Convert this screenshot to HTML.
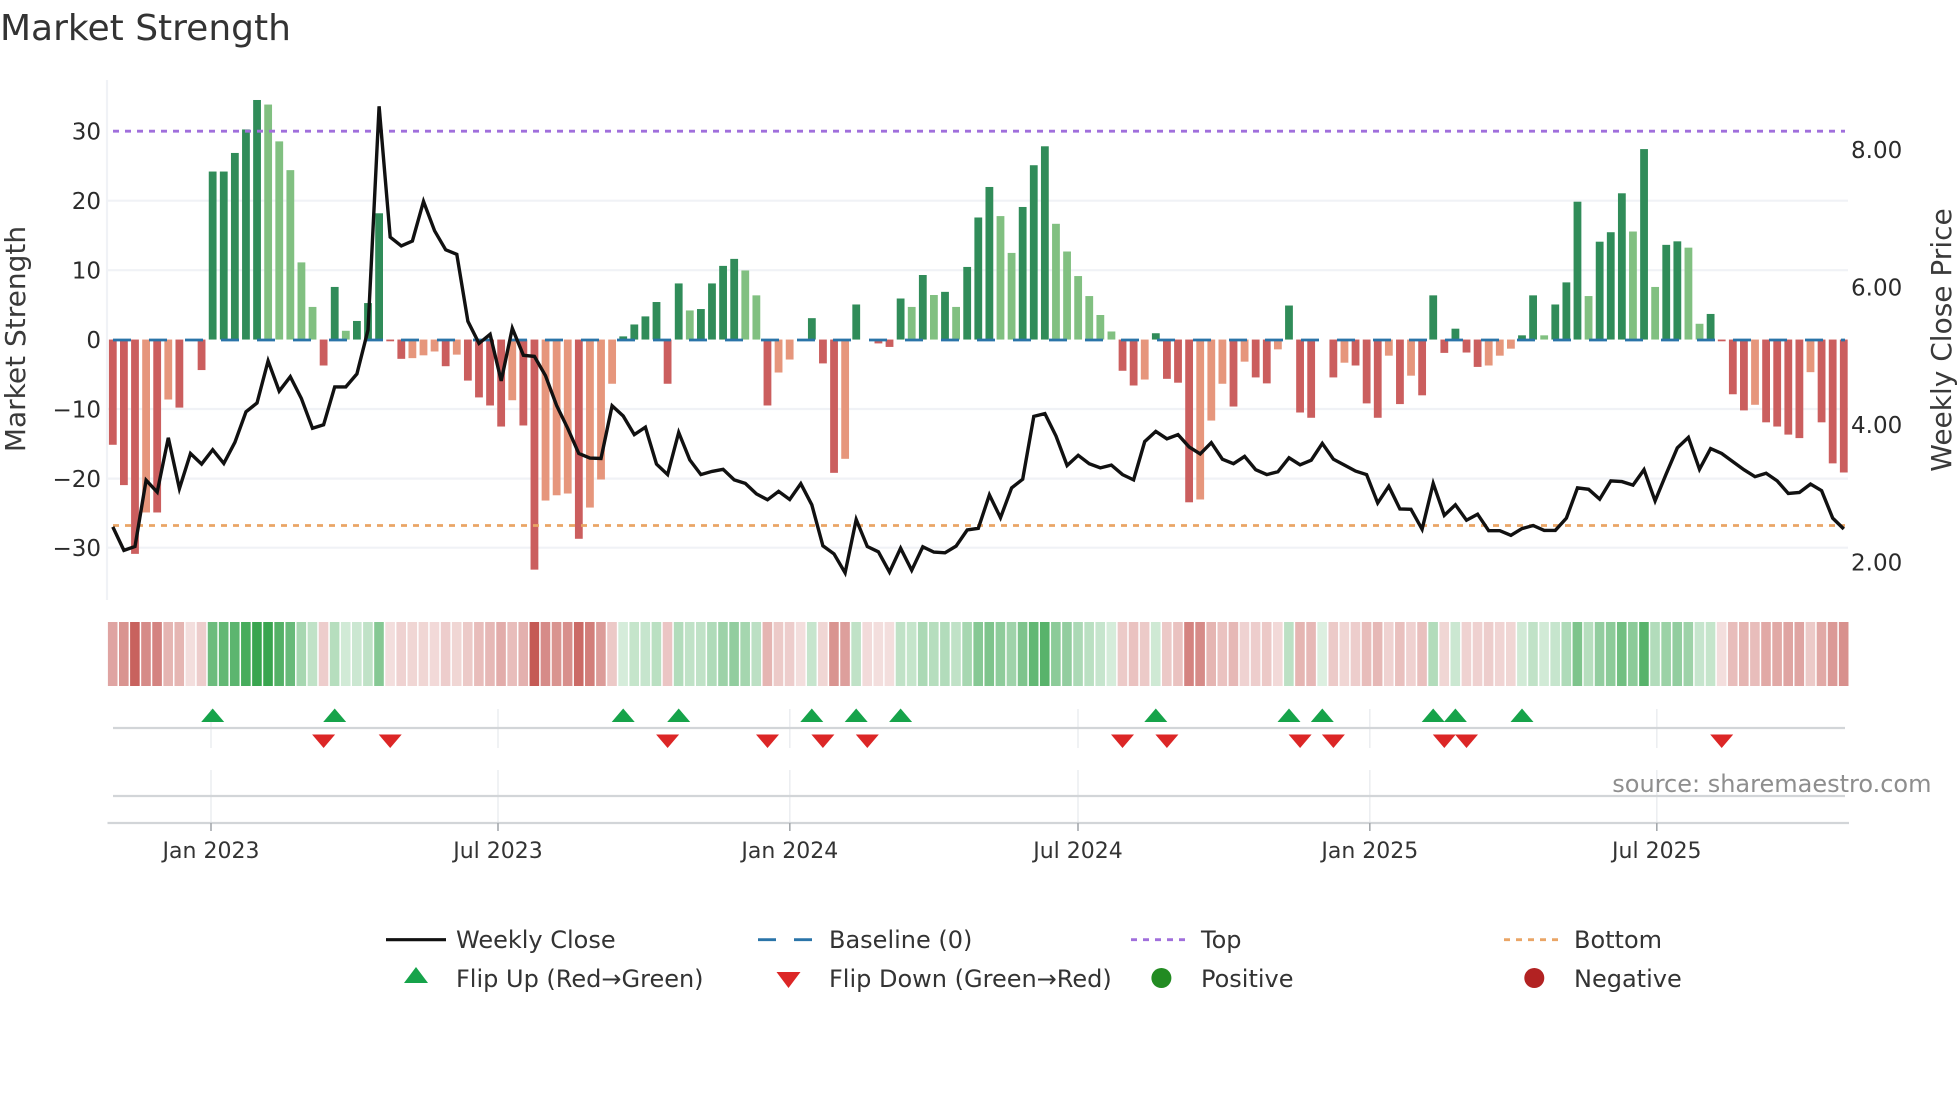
<!DOCTYPE html>
<html lang="en">
<head>
<meta charset="utf-8">
<title>Market Strength</title>
<style>
html,body{margin:0;padding:0;background:#fff;}
body{width:1960px;height:1102px;overflow:hidden;}
svg{display:block;filter:blur(.35px);}
text{font-family:"DejaVu Sans","Liberation Sans",sans-serif;}
.t{font-size:23px;fill:#2b2b2b;}
.x{font-size:22px;fill:#333;text-anchor:middle;}
.l{font-size:24px;fill:#333;}
.a{font-size:28px;fill:#3a3a3a;text-anchor:middle;}
</style>
</head>
<body>
<svg id="c" xmlns="http://www.w3.org/2000/svg" width="1960" height="1102" viewBox="0 0 1960 1102">
<rect width="1960" height="1102" fill="#fff"/>
<text x="0" y="40" font-size="36" fill="#333">Market Strength</text>

<g stroke="#f0f2f6" stroke-width="2.2">
<line x1="107" x2="1848" y1="200.7" y2="200.7"/>
<line x1="107" x2="1848" y1="270.2" y2="270.2"/>
<line x1="107" x2="1848" y1="409" y2="409"/>
<line x1="107" x2="1848" y1="478.6" y2="478.6"/>
<line x1="107" x2="1848" y1="547.7" y2="547.7"/>
<line x1="107" x2="107" y1="80" y2="600"/>
</g>
<g id="bars"></g>
<line x1="113" x2="1845" y1="340" y2="340" stroke="#2a74a8" stroke-width="2.8" stroke-dasharray="18 18"/>
<line x1="113" x2="1845" y1="131.2" y2="131.2" stroke="#a06fdc" stroke-width="2.8" stroke-dasharray="6 6"/>
<line x1="113" x2="1845" y1="525.5" y2="525.5" stroke="#eaa566" stroke-width="2.8" stroke-dasharray="6 6"/>
<polyline id="close" fill="none" stroke="#111" stroke-width="3.4" stroke-linejoin="miter"/>

<g class="t" text-anchor="end">
<text class="t" x="101" y="139.7">30</text>
<text class="t" x="101" y="209">20</text>
<text class="t" x="101" y="278.7">10</text>
<text class="t" x="101" y="348">0</text>
<text class="t" x="101" y="417.5">−10</text>
<text class="t" x="101" y="487">−20</text>
<text class="t" x="101" y="556">−30</text>
</g>
<text class="t" x="1851" y="157.8">8.00</text>
<text class="t" x="1851" y="295.7">6.00</text>
<text class="t" x="1851" y="433.2">4.00</text>
<text class="t" x="1851" y="570.7">2.00</text>
<text class="a" transform="translate(25,339) rotate(-90)">Market Strength</text>
<text class="a" transform="translate(1951,340) rotate(-90)">Weekly Close Price</text>

<g id="heat"></g>

<g stroke="#eceef1" stroke-width="1.6">
<line x1="211" x2="211" y1="709" y2="748"/><line x1="211" x2="211" y1="770" y2="823"/>
<line x1="498" x2="498" y1="709" y2="748"/><line x1="498" x2="498" y1="770" y2="823"/>
<line x1="789.8" x2="789.8" y1="709" y2="748"/><line x1="789.8" x2="789.8" y1="770" y2="823"/>
<line x1="1078" x2="1078" y1="709" y2="748"/><line x1="1078" x2="1078" y1="770" y2="823"/>
<line x1="1369.8" x2="1369.8" y1="709" y2="748"/><line x1="1369.8" x2="1369.8" y1="770" y2="823"/>
<line x1="1656.8" x2="1656.8" y1="709" y2="748"/><line x1="1656.8" x2="1656.8" y1="770" y2="823"/>
</g>
<g stroke="#d2d5d8" stroke-width="2.2">
<line x1="113" x2="1845" y1="728" y2="728"/>
<line x1="113" x2="1845" y1="796" y2="796"/>
<line x1="107.5" x2="1849" y1="823" y2="823"/>
</g>
<g stroke="#a5a9ad" stroke-width="1.6">
<line x1="211" x2="211" y1="823" y2="831"/>
<line x1="498" x2="498" y1="823" y2="831"/>
<line x1="789.8" x2="789.8" y1="823" y2="831"/>
<line x1="1078" x2="1078" y1="823" y2="831"/>
<line x1="1369.8" x2="1369.8" y1="823" y2="831"/>
<line x1="1656.8" x2="1656.8" y1="823" y2="831"/>
</g>
<g id="flips"></g>
<text class="x" x="211" y="858">Jan 2023</text>
<text class="x" x="498" y="858">Jul 2023</text>
<text class="x" x="789.8" y="858">Jan 2024</text>
<text class="x" x="1078" y="858">Jul 2024</text>
<text class="x" x="1369.8" y="858">Jan 2025</text>
<text class="x" x="1656.8" y="858">Jul 2025</text>
<text x="1931.5" y="792" font-size="24" fill="#8e8e8e" text-anchor="end">source: sharemaestro.com</text>

<line x1="386" x2="446" y1="939.7" y2="939.7" stroke="#111" stroke-width="3.2"/>
<line x1="758" x2="814" y1="939.7" y2="939.7" stroke="#2a74a8" stroke-width="2.8" stroke-dasharray="18 18"/>
<line x1="1131" x2="1186" y1="939.7" y2="939.7" stroke="#a06fdc" stroke-width="2.8" stroke-dasharray="6 6"/>
<line x1="1504" x2="1559" y1="939.7" y2="939.7" stroke="#eaa566" stroke-width="2.8" stroke-dasharray="6 6"/>
<polygon points="416,967 428,983 404,983" fill="#16a34a"/>
<polygon points="776.5,972 800.5,972 788.5,988" fill="#dc2626"/>
<circle cx="1161.4" cy="978" r="10" fill="#228b22"/>
<circle cx="1534.3" cy="978" r="10" fill="#b22222"/>
<text class="l" x="456" y="948">Weekly Close</text>
<text class="l" x="829" y="948">Baseline (0)</text>
<text class="l" x="1201" y="948">Top</text>
<text class="l" x="1574" y="948">Bottom</text>
<text class="l" x="456" y="987">Flip Up (Red→Green)</text>
<text class="l" x="829" y="987">Flip Down (Green→Red)</text>
<text class="l" x="1201" y="987">Positive</text>
<text class="l" x="1574" y="987">Negative</text>
</svg>
<script>
(function(){
var NS="http://www.w3.org/2000/svg";
function el(p,n,a){var e=document.createElementNS(NS,n);for(var k in a)e.setAttribute(k,a[k]);document.getElementById(p).appendChild(e);return e;}
var X0=112.8,P=11.096;
function cx(i){return X0+P*i;}
function yy(z){return 60+z/2.851;}
var b="1097d 1212d 1408d 1290l 1290d 968l 991d 797d 884d 318d 318d 265d 198d 114d 127l 232l 314l 577l 704l 871d 647d 772l 744d 693d 437d 802d 852d 850l 842l 831l 873d 840l 914d 962d 985d 1045d 970l 1042d 1453d 1256l 1241l 1236l 1365d 1276l 1196l 923l 788d 754d 731d 690d 923d 637d 714l 710d 637d 587d 567d 600l 671l 985d 891l 854l 797d 736d 865d 1177d 1137l 697d 797d 808d 818d 680d 704l 613d 670l 661d 704l 590d 449d 362d 445l 550l 419d 300d 246d 467l 546l 616l 673l 727l 774l 886d 928d 911l 779d 909d 920d 1261d 1253l 1028l 923l 988d 860l 905d 922d 825l 700d 1005d 1020d 797d 905d 863l 871d 979d 1020d 843l 981d 900l 956d 671d 835d 766d 834d 875d 871l 843l 823l 785d 671d 785l 697d 634d 404d 673l 518d 491d 380d 489l 254d 647l 527d 517d 535l 752l 724d 802d 953d 999d 983l 1033d 1045d 1068d 1078d 890l 1033d 1150d 1176d".split(" ");
var c={gd:"#308c59",gl:"#81c081",rd:"#cb5e5e",rl:"#e6967c"};
var y0=yy(797);
b.forEach(function(s,i){
  var z=parseInt(s),t=s.slice(-1);
  if(z===797)return;
  var y=yy(z),up=z<797;
  el("bars","rect",{x:(cx(i)-3.9).toFixed(2),width:7.8,y:(up?y:y0).toFixed(2),height:Math.abs(y-y0).toFixed(2),fill:c[(up?"g":"r")+t]});
});
var l=[1331,1398,1387,1198,1232,1077,1222,1122,1152,1111,1150,1090,1003,978,858,944,903,965,1050,1040,932,932,895,770,132,505,530,516,403,487,541,554,745,808,782,915,765,842,845,900,985,1050,1122,1135,1136,986,1015,1068,1047,1152,1182,1062,1140,1182,1173,1167,1197,1207,1237,1254,1230,1253,1208,1268,1385,1408,1462,1310,1387,1402,1460,1392,1455,1388,1403,1405,1386,1340,1335,1240,1305,1220,1195,1016,1008,1072,1156,1127,1151,1163,1155,1182,1197,1088,1059,1080,1068,1103,1123,1091,1138,1151,1130,1168,1182,1174,1134,1154,1141,1093,1138,1155,1172,1182,1263,1215,1280,1281,1338,1207,1298,1268,1312,1295,1342,1342,1355,1336,1327,1341,1341,1306,1220,1224,1252,1200,1202,1212,1168,1257,1180,1106,1076,1167,1108,1122,1145,1168,1188,1178,1200,1236,1233,1209,1228,1306,1337];
document.getElementById("close").setAttribute("points",l.map(function(z,i){return cx(i).toFixed(1)+","+yy(z).toFixed(1);}).join(" "));
var h=[-.55,-.65,-.95,-.7,-.75,-.45,-.45,-.2,-.3,.7,.75,.78,.88,.95,.95,.82,.72,.42,.3,-.3,.35,.22,.25,.3,.58,-.2,-.27,-.25,-.25,-.23,-.3,-.25,-.32,-.4,-.43,-.5,-.4,-.48,-1,-.7,
-.65,-.68,-.9,-.78,-.6,-.33,.2,.28,.27,.33,-.35,.37,.3,.3,.38,.47,.52,.43,.32,-.45,-.32,-.3,-.2,.27,-.25,-.65,-.58,.3,-.22,-.2,-.2,.3,.28,.4,.35,.37,.3,.42,.58,
.62,.54,.46,.62,.75,.8,.55,.52,.4,.33,.27,.2,-.32,-.37,-.32,.23,-.33,-.37,-.75,-.7,-.45,-.37,-.43,-.27,-.3,-.33,-.23,.32,-.45,-.43,.17,-.32,-.25,-.3,-.4,-.43,-.27,-.38,-.28,-.38,
.37,-.25,.25,-.27,-.28,-.3,-.26,-.25,.22,.3,.22,.27,.38,.62,.35,.52,.55,.68,.55,.8,.37,.48,.52,.47,.27,.28,-.2,-.4,-.45,-.4,-.52,-.52,-.55,-.55,-.32,-.52,-.62,-.67];
h.forEach(function(a,i){
  el("heat","rect",{x:(cx(i)-4.9).toFixed(2),y:622,width:9.6,height:64,fill:a>0?"#2ea046":"#c55a55","fill-opacity":Math.abs(a)});
});
[9,20,46,51,63,67,71,94,106,109,119,121,127].forEach(function(i){
  var x=cx(i);
  el("flips","polygon",{points:x.toFixed(1)+",708.5 "+(x+11.5).toFixed(1)+",722 "+(x-11.5).toFixed(1)+",722",fill:"#16a34a"});
});
[19,25,50,59,64,68,91,95,107,110,120,122,145].forEach(function(i){
  var x=cx(i);
  el("flips","polygon",{points:(x-11.5).toFixed(1)+",734.5 "+(x+11.5).toFixed(1)+",734.5 "+x.toFixed(1)+",748",fill:"#dc2626"});
});
})();
</script>
</body>
</html>
